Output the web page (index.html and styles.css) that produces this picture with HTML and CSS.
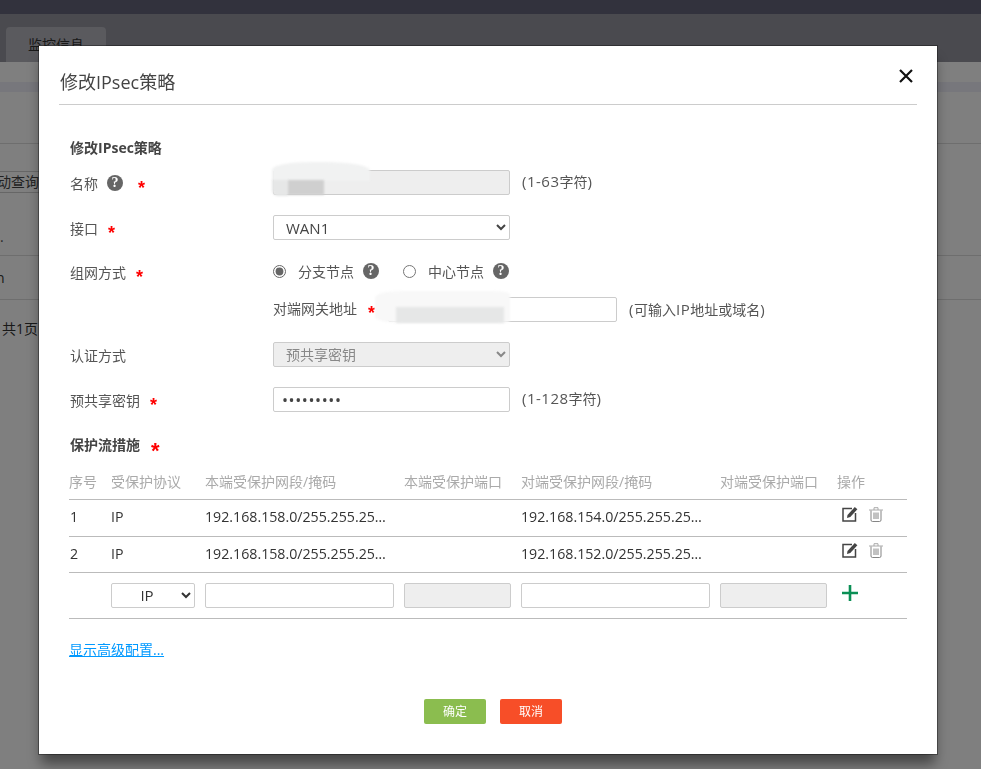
FILE: index.html
```html
<!DOCTYPE html>
<html lang="zh-CN">
<head>
<meta charset="utf-8">
<title>修改IPsec策略</title>
<link rel="stylesheet" href="styles.css">
</head>
<body>
<div class="page">
  <div class="topbar"></div>
  <div class="tabbar"><div class="tab">监控信息</div></div>
  <div class="band-a"></div>
  <div class="band-b"></div>
  <div class="bg-row bg-r1"></div>
  <div class="bg-row bg-r2"><span class="bg-btn">动查询</span></div>
  <div class="bg-row bg-r3"><span class="bg-dot">.</span></div>
  <div class="bg-row bg-r4"><span class="bg-cut">n</span></div>
  <div class="bg-pager">共1页</div>
</div>
<div class="backdrop"></div>

<section class="modal">
  <header class="modal-head">
    <h1 class="modal-title">修改IPsec策略</h1>
    <svg class="close" viewBox="0 0 16 16" width="16" height="16"><path d="M2 2 14 14M14 2 2 14" stroke="#111" stroke-width="2.2" fill="none"/></svg>
  </header>

  <div class="modal-body">
    <h2 class="sec-title">修改IPsec策略</h2>

    <div class="row r-name">
      <div class="label">名称<span class="help lab-help">?</span><span class="star s-name">*</span></div>
      <input class="field field-w dis" type="text" disabled>
      <span class="hint">(1-63<span class="cjk">字符</span>)</span>
      <div class="blob blob-name"></div>
      <div class="blob blob-a"></div>
      <div class="blob blob-b"></div>
    </div>

    <div class="row r-if">
      <div class="label">接口<span class="star">*</span></div>
      <select class="field field-w sel sel-lat"><option>WAN1</option></select>
    </div>

    <div class="row r-net">
      <div class="label lab-net">组网方式<span class="star">*</span></div>
      <label class="radio"><input type="radio" name="m" checked><span>分支节点</span><span class="help">?</span></label>
      <label class="radio radio2"><input type="radio" name="m"><span>中心节点</span><span class="help">?</span></label>
    </div>

    <div class="row r-peer">
      <div class="label"></div>
      <span class="peer-lab">对端网关地址<span class="star">*</span></span>
      <input class="field peer-in" type="text">
      <span class="hint hint-peer">(<span class="cjk">可输入</span>IP<span class="cjk">地址或域名</span>)</span>
      <div class="blob blob-peer"></div>
      <div class="blob blob-c"></div>
    </div>

    <div class="row r-auth">
      <div class="label">认证方式</div>
      <select class="field field-w sel dis" disabled><option>预共享密钥</option></select>
    </div>

    <div class="row r-key">
      <div class="label">预共享密钥<span class="star">*</span></div>
      <input class="field field-w pw" type="password" value="123456789">
      <span class="hint">(1-128<span class="cjk">字符</span>)</span>
    </div>

    <h2 class="sec-title r-prot">保护流措施<span class="star star-b">*</span></h2>

    <table class="grid">
      <colgroup>
        <col class="c1"><col class="c2"><col class="c3"><col class="c4"><col class="c3"><col class="c4"><col class="c7">
      </colgroup>
      <thead>
        <tr><th>序号</th><th>受保护协议</th><th>本端受保护网段/掩码</th><th>本端受保护端口</th><th>对端受保护网段/掩码</th><th>对端受保护端口</th><th>操作</th></tr>
      </thead>
      <tbody>
        <tr class="row-a">
          <td class="first">1</td><td>IP</td><td class="ell">192.168.158.0/255.255.255.0</td><td></td><td class="ell">192.168.154.0/255.255.255.0</td><td></td>
          <td class="ops">
            <svg class="ic" viewBox="0 0 16 16" width="16" height="16"><path d="M10 2.500H1V15H13.500V7" fill="none" stroke="#444" stroke-width="1.500"/><path d="M5.500 9 12.800 1 15.400 3.200 8.300 11 5 12Z" fill="#444"/></svg>
            <svg class="ic trash" viewBox="0 0 14 15" width="14" height="15"><path d="M0 3H14M5 3V.7H9V3" fill="none" stroke="#aaa" stroke-width="1"/><path d="M2 3.500V13A1.500 1.500 0 0 0 3.500 14.500H10.500A1.500 1.500 0 0 0 12 13V3.500M5 5.500V12M7 5.500V12M9 5.500V12" fill="none" stroke="#777" stroke-width=".9"/></svg>
          </td>
        </tr>
        <tr class="row-b">
          <td class="first">2</td><td>IP</td><td class="ell">192.168.158.0/255.255.255.0</td><td></td><td class="ell">192.168.152.0/255.255.255.0</td><td></td>
          <td class="ops">
            <svg class="ic" viewBox="0 0 16 16" width="16" height="16"><path d="M10 2.500H1V15H13.500V7" fill="none" stroke="#444" stroke-width="1.500"/><path d="M5.500 9 12.800 1 15.400 3.200 8.300 11 5 12Z" fill="#444"/></svg>
            <svg class="ic trash" viewBox="0 0 14 15" width="14" height="15"><path d="M0 3H14M5 3V.7H9V3" fill="none" stroke="#aaa" stroke-width="1"/><path d="M2 3.500V13A1.500 1.500 0 0 0 3.500 14.500H10.500A1.500 1.500 0 0 0 12 13V3.500M5 5.500V12M7 5.500V12M9 5.500V12" fill="none" stroke="#777" stroke-width=".9"/></svg>
          </td>
        </tr>
        <tr class="add-row">
          <td></td>
          <td><select class="field sel sel-ip"><option>IP</option></select></td>
          <td><input class="field cell-in" type="text"></td>
          <td><input class="field cell-in dis" type="text" disabled></td>
          <td><input class="field cell-in" type="text"></td>
          <td><input class="field cell-in dis" type="text" disabled></td>
          <td class="ops-add"><svg viewBox="0 0 16 16" width="16" height="16"><path d="M8 0V16M0 8H16" stroke="#0a8f55" stroke-width="2.600" fill="none"/></svg></td>
        </tr>
      </tbody>
    </table>

    <a class="more" href="#">显示高级配置...</a>

    <div class="actions">
      <button class="btn ok" type="button">确定</button>
      <button class="btn cancel" type="button">取消</button>
    </div>
  </div>
</section>
</body>
</html>
```

FILE: styles.css
```css
* { box-sizing: border-box; }
html, body { margin: 0; height: 100%; overflow: hidden; }
body {
  font-family: "Open Sans", "Noto Sans CJK SC", sans-serif;
  font-size: 14px;
  color: #444;
  background: #fff;
}

/* page behind the dialog */
.page { height: 769px; overflow: hidden; }
.topbar { height: 14px; background: #64647a; }
.tabbar { height: 48px; background: #94949f; padding: 13px 0 0 6px; }
.tab {
  width: 100px; height: 35px; background: #b4b4bc; border-radius: 4px 4px 0 0;
  text-align: center; line-height: 36px; color: #333;
}
.band-a { height: 20px; background: #fff; }
.band-b { height: 10px; background: #eeeef8; }
.bg-row { border-bottom: 1px solid #ddd; display: flex; align-items: center; }
.bg-r1 { height: 52px; }
.bg-r2 { height: 57px; border-bottom-color: transparent; }
.bg-r3 { height: 55px; }
.bg-r4 { height: 44px; }
.bg-btn {
  margin-left: -10px; padding: 0 6px; height: 22px; line-height: 20px;
  border: 1px solid #ccc; border-radius: 2px; margin-top: 20px; color: #444;
}
.bg-dot { color: #555; margin-top: 16px; }
.bg-cut { margin-left: -4px; color: #333; }
.bg-pager { margin: 18px 0 0 2px; color: #333; }
.backdrop { position: fixed; inset: 0; background: rgba(0, 0, 0, .5); }

/* dialog */
.modal {
  position: absolute; left: 39px; top: 46px; width: 898px; height: 708px;
  background: #fff; padding: 0 20px;
  box-shadow: 0 0 0 1px rgba(0, 0, 0, .35), 0 12px 12px -2px rgba(0, 0, 0, .45);
}
.modal-head {
  height: 59px; border-bottom: 1px solid #ccc;
  display: flex; align-items: center; justify-content: space-between; padding: 2px 1px 0 1px;
}
.modal-title { margin: 11px 0 0; font-size: 18px; font-weight: 400; color: #444; line-height: 26px; }
.close { margin: 0 2px 0 0; }
.modal-body { padding: 0 10px; position: relative; }
.sec-title { margin: 0; font-size: 14px; font-weight: 700; color: #444; line-height: 18px; padding: 34px 0 0 1px; box-sizing: content-box; }

.row { display: flex; align-items: center; position: relative; height: 25px; }
.r-name { margin-top: 13px; }
.r-if { margin-top: 20px; }
.r-net { margin-top: 19px; }
.r-peer { margin-top: 13px; }
.r-auth { margin-top: 20px; }
.r-key { margin-top: 20px; }
.r-prot { padding-top: 0; margin-top: 24px; display: flex; align-items: center; }

.label { width: 204px; flex: none; color: #555; font-size: 14px; padding-left: 1px; display: flex; align-items: center; }
.lab-net { padding-top: 1px; }
.star { color: #f00; font: 700 18px/14px "Liberation Sans", sans-serif; margin-left: 10px; padding-top: 5px; height: 14px; display: inline-block; }
.star-b { font-size: 22px; margin-left: 11px; padding-top: 6px; }
.s-name { margin-left: 15px; }
.help {
  width: 16px; height: 16px; border-radius: 50%; background: #666; color: #fff; flex: none;
  display: inline-flex; align-items: center; justify-content: center;
  font: 700 14px/16px "Liberation Serif", serif;
}
.lab-help { margin-left: 9px; }

.field { height: 25px; border: 1px solid #ccc; border-radius: 2px; background: #fff; font: inherit; color: #444; outline: 0; padding: 0 12px; }
.field-w { width: 237px; flex: none; }
.dis { background: #eee; }
.sel { padding: 0 8px; }
.sel.dis { color: #888; opacity: 1; }
.sel-lat { font-size: 15px; }
.pw { font-size: 16px; padding: 0 8px; letter-spacing: .6px; }
.hint { margin-left: 12px; color: #555; font-size: 15px; margin-top: -4px; letter-spacing: .5px; }
.hint-peer { margin-top: -2px; }
.cjk { font-size: 14px; letter-spacing: 0; }

.radio { display: inline-flex; align-items: center; color: #555; font-size: 14px; margin-top: -1px; }
.radio input { width: 13px; height: 13px; margin: 0 12px 0 0; accent-color: #666; }
.radio .help { margin-left: 9px; }
.radio2 { margin-left: 24px; }

.peer-lab { width: 115px; flex: none; color: #555; font-size: 14px; display: flex; align-items: center; margin-top: -3px; }
.peer-lab .star { margin-left: 11px; }
.peer-in { width: 229px; flex: none; }

.blob { position: absolute; filter: blur(.8px); }
.blob-name { left: 203px; top: -8px; width: 98px; height: 19px; background: #f1f2f2; border-radius: 40% 45% 0 0; }
.blob-a { left: 203px; top: 10px; width: 16px; height: 16px; background: #e6e7e7; border-radius: 0 0 0 6px; }
.blob-b { left: 219px; top: 10px; width: 36px; height: 15px; background: #cfcfcf; }
.blob-peer { left: 306px; top: -6px; width: 135px; height: 32px; background: #f8f8f8; border-radius: 20% 12% 8% 20%; }
.blob-c { left: 327px; top: 10px; width: 108px; height: 16px; background: #e6e7e7; }

/* table */
.grid { width: 838px; table-layout: fixed; border-collapse: collapse; margin-top: 9px; }
.c1 { width: 42px; } .c2 { width: 94px; } .c3 { width: 199px; } .c4 { width: 117px; } .c7 { width: 70px; }
.grid th { font-weight: 400; color: #aaa; font-size: 14px; text-align: left; padding: 0; height: 36px; border-bottom: 1px solid #bbb; white-space: nowrap; }
.grid td { border-bottom: 1px solid #bbb; padding: 0 0 2px; color: #333; font-size: 14.200px; }
.row-a td { height: 37px; }
.row-b td { height: 36px; }
.grid td.first { padding-left: 1px; }
.grid td.ell { white-space: nowrap; overflow: hidden; text-overflow: ellipsis; padding-right: 11px; }
.grid td.ops { white-space: nowrap; padding-left: 5px; }
.ic { vertical-align: 2px; }
.trash { margin-left: 7px; }
.grid .add-row td { height: 46px; padding: 0; }
.cell-in { width: 189px; }
.cell-in.dis { width: 107px; }
.sel-ip { width: 84px; color: #333; text-align: center; padding: 0 4px; font-size: 15px; }
.grid .add-row td.ops-add { padding-left: 5px; vertical-align: middle; }
.ops-add svg { display: block; margin: -4px 0 0; }

.more { display: block; width: max-content; margin-top: 21px; color: #09f; font-size: 14px; line-height: 20px; }
.actions { display: flex; justify-content: center; gap: 14px; margin-top: 39px; padding-left: 10px; }
.btn { width: 62px; height: 25px; border: 0; border-radius: 2px; color: #fff; font: 12px/25px "Open Sans", "Noto Sans CJK SC", sans-serif; padding: 0; }
.ok { background: #8bbd4f; }
.cancel { background: #f74e28; }
```
